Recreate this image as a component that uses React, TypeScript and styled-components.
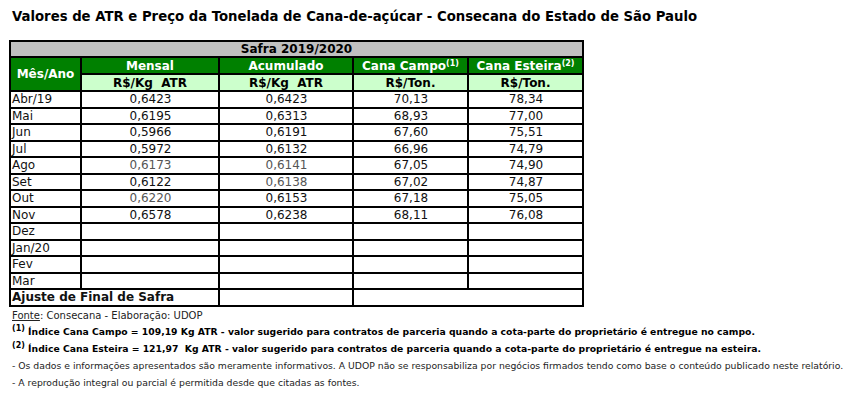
import React from 'react';
import styled, { createGlobalStyle } from 'styled-components';

const Global = createGlobalStyle`
  html, body { margin: 0; padding: 0; background: #fff; }
  body { font-family: 'DejaVu Sans', Verdana, sans-serif; color: #000; }
`;

const Page = styled.div`
  width: 849px;
  height: 402px;
  box-sizing: border-box;
  padding: 9px 0 0 9px;
  overflow: hidden;
`;

const Title = styled.h1`
  margin: 0 0 0 3px;
  font-size: 13.25px;
  font-weight: bold;
  line-height: 16px;
  white-space: nowrap;
`;

const Table = styled.table`
  margin-top: 15px;
  border-collapse: collapse;
  table-layout: fixed;
  width: 573px;
  border: 2px solid #000;
  font-size: 12px;
  line-height: 14px;
`;

const Row = styled.tr<{ $h: number }>`
  height: ${(p) => p.$h}px;
`;

type Tone = 'gray' | 'green' | 'light';
const toneBg: Record<Tone, string> = { gray: '#c0c0c0', green: '#008000', light: '#ccffcc' };

const Head = styled.th<{ $tone: Tone }>`
  border: 2px solid #000;
  padding: 0;
  font-weight: bold;
  text-align: center;
  background: ${(p) => toneBg[p.$tone]};
  color: ${(p) => (p.$tone === 'green' ? '#fff' : '#000')};
`;

const Cell = styled.td<{ $left?: boolean; $muted?: boolean; $bold?: boolean }>`
  border: 2px solid #000;
  padding: 0 0 0 1px;
  text-align: ${(p) => (p.$left ? 'left' : 'center')};
  color: ${(p) => (p.$muted ? '#555' : '#111')};
  font-weight: ${(p) => (p.$bold ? 'bold' : 'normal')};
  white-space: nowrap;
`;

const Sup = styled.sup`
  font-size: 8px;
  line-height: 0;
  vertical-align: 4px;
`;

const Notes = styled.div`
  margin: 1px 0 0 3px;
  line-height: 16.8px;
  color: #111;
  white-space: nowrap;
`;

const Note = styled.div<{ $bold?: boolean; $size: number }>`
  font-size: ${(p) => p.$size}px;
  font-weight: ${(p) => (p.$bold ? 'bold' : 'normal')};
  color: ${(p) => (p.$bold ? '#000' : '#222')};
`;

const U = styled.span`
  text-decoration: underline;
`;

type DataRow = { m: string; a?: string; b?: string; c?: string; d?: string; ma?: boolean; mb?: boolean };

const rows: DataRow[] = [
  { m: 'Abr/19', a: '0,6423', b: '0,6423', c: '70,13', d: '78,34' },
  { m: 'Mai', a: '0,6195', b: '0,6313', c: '68,93', d: '77,00' },
  { m: 'Jun', a: '0,5966', b: '0,6191', c: '67,60', d: '75,51' },
  { m: 'Jul', a: '0,5972', b: '0,6132', c: '66,96', d: '74,79' },
  { m: 'Ago', a: '0,6173', b: '0,6141', c: '67,05', d: '74,90', ma: true, mb: true },
  { m: 'Set', a: '0,6122', b: '0,6138', c: '67,02', d: '74,87', mb: true },
  { m: 'Out', a: '0,6220', b: '0,6153', c: '67,18', d: '75,05', ma: true },
  { m: 'Nov', a: '0,6578', b: '0,6238', c: '68,11', d: '76,08' },
  { m: 'Dez' },
  { m: 'Jan/20' },
  { m: 'Fev' },
  { m: 'Mar' },
];

export default function App() {
  return (
    <>
      <Global />
      <Page>
        <Title>Valores de ATR e Preço da Tonelada de Cana-de-açúcar - Consecana do Estado de São Paulo</Title>
        <Table>
          <colgroup>
            <col style={{ width: 71 }} />
            <col style={{ width: 138 }} />
            <col style={{ width: 134 }} />
            <col style={{ width: 115 }} />
            <col style={{ width: 115 }} />
          </colgroup>
          <thead>
            <Row $h={16}>
              <Head $tone="gray" colSpan={5}>Safra 2019/2020</Head>
            </Row>
            <Row $h={17}>
              <Head $tone="green" rowSpan={2}>Mês/Ano</Head>
              <Head $tone="green">Mensal</Head>
              <Head $tone="green">Acumulado</Head>
              <Head $tone="green">Cana Campo<Sup>(1)</Sup></Head>
              <Head $tone="green">Cana Esteira<Sup>(2)</Sup></Head>
            </Row>
            <Row $h={17}>
              <Head $tone="light">R$/Kg&nbsp; ATR</Head>
              <Head $tone="light">R$/Kg&nbsp; ATR</Head>
              <Head $tone="light">R$/Ton.</Head>
              <Head $tone="light">R$/Ton.</Head>
            </Row>
          </thead>
          <tbody>
            {rows.map((r) => (
              <Row $h={16.5} key={r.m}>
                <Cell $left>{r.m}</Cell>
                <Cell $muted={r.ma}>{r.a}</Cell>
                <Cell $muted={r.mb}>{r.b}</Cell>
                <Cell>{r.c}</Cell>
                <Cell>{r.d}</Cell>
              </Row>
            ))}
            <Row $h={16.5}>
              <Cell $left $bold colSpan={2}>Ajuste de Final de Safra</Cell>
              <Cell />
              <Cell colSpan={2} />
            </Row>
          </tbody>
        </Table>
        <Notes>
          <Note $size={10}><U>Fonte</U>: Consecana - Elaboração: UDOP</Note>
          <Note $bold $size={9.25}><Sup>(1)</Sup> Índice Cana Campo = 109,19 Kg ATR - valor sugerido para contratos de parceria quando a cota-parte do proprietário é entregue no campo.</Note>
          <Note $bold $size={9.25}><Sup>(2)</Sup> Índice Cana Esteira = 121,97&nbsp; Kg ATR - valor sugerido para contratos de parceria quando a cota-parte do proprietário é entregue na esteira.</Note>
          <Note $size={9.27}>- Os dados e informações apresentados são meramente informativos. A UDOP não se responsabiliza por negócios firmados tendo como base o conteúdo publicado neste relatório.</Note>
          <Note $size={9.27}>- A reprodução integral ou parcial é permitida desde que citadas as fontes.</Note>
        </Notes>
      </Page>
    </>
  );
}
